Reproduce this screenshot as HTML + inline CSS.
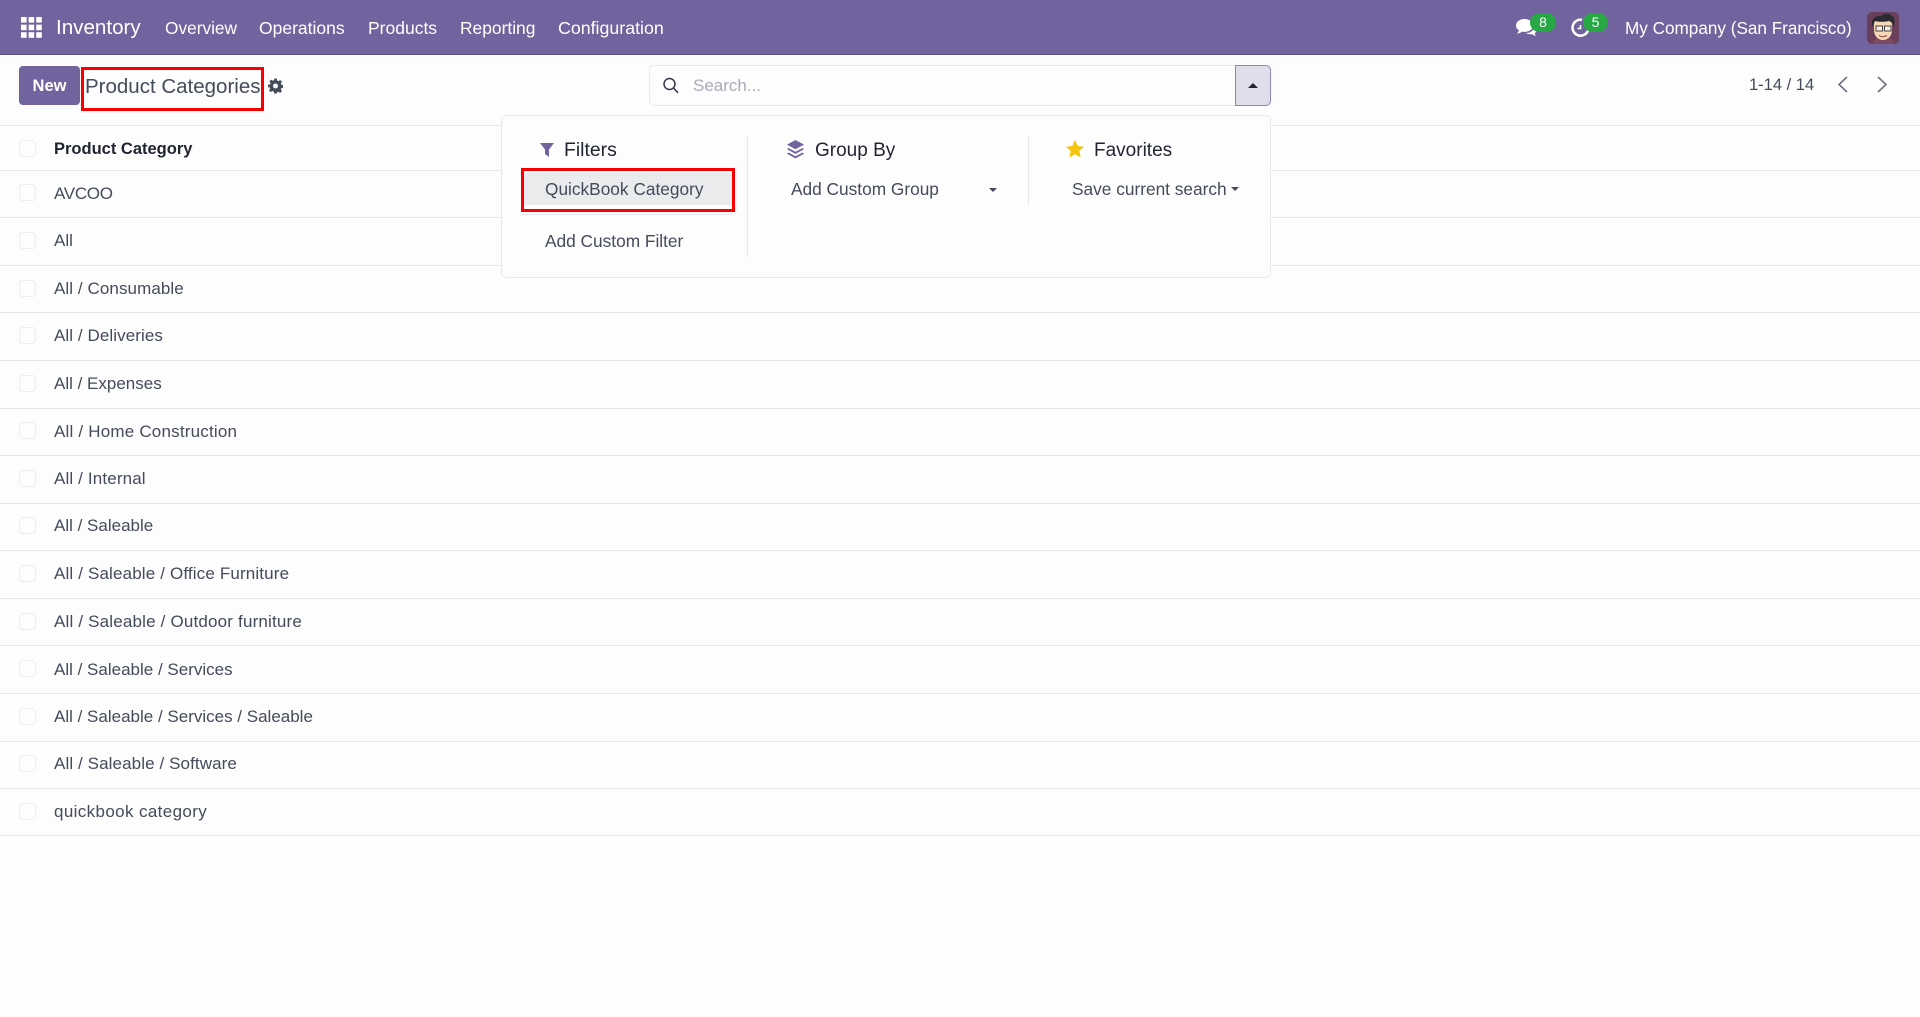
<!DOCTYPE html>
<html><head><meta charset="utf-8"><title>Product Categories</title>
<style>
*{box-sizing:border-box}
html,body{margin:0;padding:0}
body{width:1920px;height:1017px;overflow:hidden;background:#fdfdfe;font-family:"Liberation Sans",sans-serif;color:#444b5a;position:relative;font-size:17px}
.a{position:absolute;white-space:nowrap;line-height:20px}
.nav{left:0;top:0;width:1920px;height:55px;background:#71639e;border-bottom:1px solid #5f5489}
.n{color:#fff;top:18px;font-size:17.3px}
.l{position:absolute;left:0;width:1920px;height:1px;background:#e6e7ea}
.c{position:absolute;left:19px;width:17px;height:17px;border:1px solid #ecedf0;border-radius:4px;background:#fdfdfe}
.t{left:54px;font-size:17px;color:#444b5a}
.h{color:#1f2430;top:141px;font-size:19px}
.m{font-size:17.3px;color:#444b5a}
.red{position:absolute;border:3px solid #f80000}
</style></head><body>
<div class="a nav"></div>
<svg class="a" style="left:21px;top:17px" width="21" height="21" fill="#fff"><rect x="0" y="0" width="5.6" height="5.6"/><rect x="7.6" y="0" width="5.6" height="5.6"/><rect x="15.2" y="0" width="5.6" height="5.6"/><rect x="0" y="7.6" width="5.6" height="5.6"/><rect x="7.6" y="7.6" width="5.6" height="5.6"/><rect x="15.2" y="7.6" width="5.6" height="5.6"/><rect x="0" y="15.2" width="5.6" height="5.6"/><rect x="7.6" y="15.2" width="5.6" height="5.6"/><rect x="15.2" y="15.2" width="5.6" height="5.6"/></svg>
<div class="a n" style="left:56px;font-size:20.6px">Inventory</div>
<div class="a n" style="left:165px">Overview</div>
<div class="a n" style="left:259px;font-size:17.5px">Operations</div>
<div class="a n" style="left:368px;font-size:17.5px">Products</div>
<div class="a n" style="left:460px;font-size:17.4px">Reporting</div>
<div class="a n" style="left:558px;font-size:17.8px">Configuration</div>
<svg class="a" style="left:1515px;top:18px" width="24" height="22" fill="#fff"><path d="M9.500 1C4.500 1 1 4 1 7.500c0 2 1.200 3.700 3 4.800C3.800 13.500 3 14.500 2 15.500c2 0 3.800-.8 5-1.900.8.200 1.600.3 2.500.3 5 0 8.500-2.900 8.500-6.400S14.500 1 9.500 1z"/><path d="M19 7c1.800 1 3 2.500 3 4.300 0 1.600-.9 3-2.400 3.900.2 1 .9 1.900 1.700 2.600-1.700-.1-3.200-.8-4.200-1.700-.7.100-1.400.2-2.100.1-1.500 0-3-.4-4.100-1.200 5 .2 8.800-3 8.100-8z"/></svg>
<div class="a" style="left:1530px;top:13px;width:26px;height:19px;border-radius:10px;background:#28a745;color:#fff;font-size:14px;text-align:center;line-height:19px">8</div>
<svg class="a" style="left:1571px;top:18px" width="22" height="20" fill="none" stroke="#fff" stroke-width="2.500"><path d="M11 1.800A8 8 0 1 0 17.200 12"/><path d="M9.500 7v3.500H6.500" stroke-width="1.600"/></svg>
<div class="a" style="left:1583px;top:13px;width:25px;height:19px;border-radius:10px;background:#28a745;color:#fff;font-size:14px;text-align:center;line-height:19px">5</div>
<div class="a n" style="left:1625px;font-size:17.15px">My Company (San Francisco)</div>
<svg class="a" style="left:1867px;top:12px" width="32" height="32" viewBox="0 0 32 32"><rect width="32" height="32" rx="5" fill="#6b3f5a"/><path d="M6 32c1-6 5-8 10-8s10 2 11 8z" fill="#7d4a5f"/><path d="M7 13c0-6 4-8 9-8s9 2 9 8v5c0 6-4 10-9 10s-9-4-9-10z" fill="#f6d8b6"/><path d="M5 15C3 7 9 3 14 4c3-3 9-3 11 0 3 1 3 7 2 11-1-4-3-5-5-6-5 1-11 1-14 0-1 2-2 4-3 6z" fill="#2a2a30"/><rect x="9" y="14" width="6.500" height="5" fill="#fff" fill-opacity=".5" stroke="#444" stroke-width="1"/><rect x="17.500" y="14" width="6.500" height="5" fill="#fff" fill-opacity=".5" stroke="#444" stroke-width="1"/><path d="M12 23.500c2 1.500 5 1.500 8 0" stroke="#8a4a3a" fill="none"/></svg>

<div class="a" style="left:19px;top:66px;width:61px;height:39px;background:#71639e;border-radius:4px;color:#fff;font-weight:bold;font-size:16.5px;text-align:center;line-height:40px">New</div>
<div class="a" style="left:85px;top:74px;font-size:20.5px;line-height:25px;color:#444b5a">Product Categories</div>
<div class="red" style="left:81px;top:67px;width:183px;height:44px"></div>
<svg class="a" style="left:268px;top:78px" width="15" height="16" viewBox="0 0 24 24" fill="#444b5a"><path fill-rule="evenodd" d="M10 0h4l.7 3.300 2 .8L19.500 2.300l2.800 2.800-1.800 2.800.8 2 3.300.7v4l-3.300.7-.8 2 1.800 2.800-2.800 2.800-2.800-1.800-2 .8L14 24h-4l-.7-3.300-2-.8-2.800 1.800-2.800-2.800 1.800-2.800-.8-2L0 14v-4l3.300-.7.8-2-1.800-2.800 2.800-2.800 2.800 1.800 2-.8zM12 8a4 4 0 1 0 0 8 4 4 0 0 0 0-8z"/></svg>

<div class="a" style="left:649px;top:65px;width:622px;height:41px;border:1px solid #e9eaed;border-radius:5px"></div>
<svg class="a" style="left:662px;top:77px" width="18" height="18" fill="none" stroke="#333a47" stroke-width="1.500"><circle cx="7.500" cy="7" r="5.500"/><path d="M11.500 11l4.500 4.800"/></svg>
<div class="a" style="left:693px;top:76px;color:#a9adb8;font-size:17px">Search...</div>
<div class="a" style="left:1235px;top:65px;width:36px;height:41px;background:#e0deea;border:1px solid #8f86b5;border-radius:0 5px 5px 0"></div>
<div class="a" style="left:1248px;top:83px;width:0;height:0;border-left:5px solid transparent;border-right:5px solid transparent;border-bottom:5px solid #1f2430"></div>

<div class="a" style="left:1749px;top:75px;font-size:16.5px">1-14 / 14</div>
<svg class="a" style="left:1836px;top:75px" width="16" height="20" fill="none" stroke="#6c7280" stroke-width="1.600"><path d="M11 2L3 9.500 11 17"/></svg>
<svg class="a" style="left:1874px;top:75px" width="16" height="20" fill="none" stroke="#6c7280" stroke-width="1.600"><path d="M4 2l8 7.500L4 17"/></svg>

<div class="l" style="top:125px"></div>
<div class="l" style="top:170px"></div>
<div class="l" style="top:217px"></div>
<div class="l" style="top:265px"></div>
<div class="l" style="top:312px"></div>
<div class="l" style="top:360px"></div>
<div class="l" style="top:408px"></div>
<div class="l" style="top:455px"></div>
<div class="l" style="top:503px"></div>
<div class="l" style="top:550px"></div>
<div class="l" style="top:598px"></div>
<div class="l" style="top:645px"></div>
<div class="l" style="top:693px"></div>
<div class="l" style="top:741px"></div>
<div class="l" style="top:788px"></div>
<div class="l" style="top:835px"></div>

<div class="c" style="top:140px"></div><div class="a" style="left:54px;top:139px;font-weight:bold;color:#1f2430;font-size:16.5px">Product Category</div>
<div class="c" style="top:184px"></div><div class="a t" style="top:184px;letter-spacing:-.3px">AVCOO</div>
<div class="c" style="top:232px"></div><div class="a t" style="top:231px">All</div>
<div class="c" style="top:280px"></div><div class="a t" style="top:279px;letter-spacing:.08px">All / Consumable</div>
<div class="c" style="top:327px"></div><div class="a t" style="top:326px;letter-spacing:.08px">All / Deliveries</div>
<div class="c" style="top:375px"></div><div class="a t" style="top:374px">All / Expenses</div>
<div class="c" style="top:422px"></div><div class="a t" style="top:422px;letter-spacing:.2px">All / Home Construction</div>
<div class="c" style="top:470px"></div><div class="a t" style="top:469px;letter-spacing:.14px">All / Internal</div>
<div class="c" style="top:517px"></div><div class="a t" style="top:516px">All / Saleable</div>
<div class="c" style="top:565px"></div><div class="a t" style="top:564px;letter-spacing:.15px">All / Saleable / Office Furniture</div>
<div class="c" style="top:613px"></div><div class="a t" style="top:612px;letter-spacing:.18px">All / Saleable / Outdoor furniture</div>
<div class="c" style="top:660px"></div><div class="a t" style="top:660px">All / Saleable / Services</div>
<div class="c" style="top:708px"></div><div class="a t" style="top:707px">All / Saleable / Services / Saleable</div>
<div class="c" style="top:755px"></div><div class="a t" style="top:754px;letter-spacing:.1px">All / Saleable / Software</div>
<div class="c" style="top:803px"></div><div class="a t" style="top:802px;letter-spacing:.37px">quickbook category</div>

<div class="a" style="left:501px;top:115px;width:770px;height:163px;background:#fdfdfe;border:1px solid #e8e9ec;border-radius:5px"></div>
<div class="a" style="left:747px;top:136px;width:1px;height:121px;background:#e8e9ec"></div>
<div class="a" style="left:1028px;top:136px;width:1px;height:69px;background:#e8e9ec"></div>
<svg class="a" style="left:540px;top:143px" width="15" height="15" fill="#71639e"><path d="M0 0h14L9 6.500V14L5 11V6.500z"/></svg>
<div class="a h" style="left:564px;top:140px;font-size:19.400px">Filters</div>
<svg class="a" style="left:786px;top:139px" width="19" height="20" fill="#71639e"><path d="M9.500 1l8.500 4.600-8.500 4.600L1 5.600z"/><path d="M2.400 9l7.100 3.800L16.600 9 18 10.300l-8.500 4.600L1 10.300z"/><path d="M2.400 13.500l7.100 3.800 7.100-3.800 1.400 1.300-8.500 4.600L1 14.800z"/></svg>
<div class="a h" style="left:815px">Group By</div>
<svg class="a" style="left:1066px;top:140px" width="18" height="18" fill="#f3c50f"><path d="M9 0l2.700 6 6.300.7-4.700 4.300 1.300 6.500L9 14.200l-5.600 3.300L4.700 11 0 6.700 6.300 6z"/></svg>
<div class="a h" style="left:1094px">Favorites</div>
<div class="a" style="left:524px;top:173px;width:211px;height:32px;background:#e9ebed"></div>
<div class="red" style="left:521px;top:168px;width:214px;height:44px"></div>
<div class="a" style="left:521px;top:214px;width:212px;height:1px;background:#e8e9ec"></div>
<div class="a m" style="left:545px;top:179px">QuickBook Category</div>
<div class="a m" style="left:545px;top:231px">Add Custom Filter</div>
<div class="a m" style="left:791px;top:179px">Add Custom Group</div>
<div class="a" style="left:989px;top:188px;width:0;height:0;border-left:4.500px solid transparent;border-right:4.500px solid transparent;border-top:4.500px solid #444b5a"></div>
<div class="a m" style="left:1072px;top:179px">Save current search</div>
<div class="a" style="left:1231px;top:187px;width:0;height:0;border-left:4px solid transparent;border-right:4px solid transparent;border-top:4px solid #444b5a"></div>
</body></html>
